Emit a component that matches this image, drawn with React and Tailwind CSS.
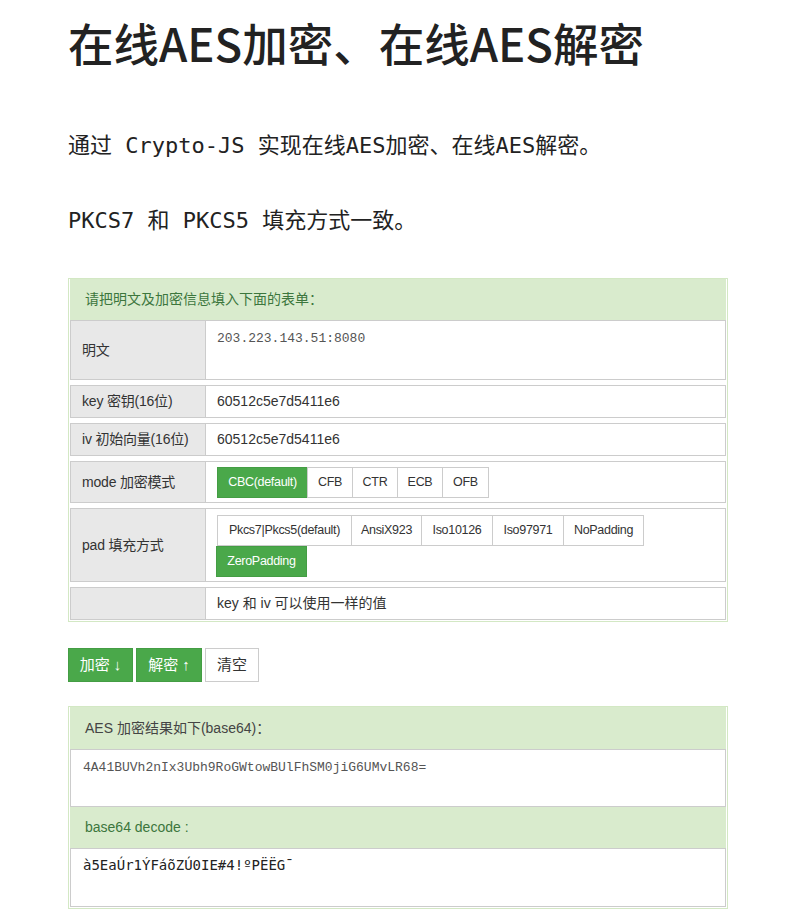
import React from 'react'

const sans = { fontFamily: '"Liberation Sans", "Noto Sans CJK SC", sans-serif' }

function Row({ label, className = '', children }) {
  return (
    <div className={`flex border border-[#cccccc] ${className}`}>
      <div className="w-[135px] shrink-0 bg-[#e8e8e8] border-r border-[#cccccc] flex items-center pl-[11px] text-[14px] text-[#333] tracking-[-0.2px]">
        {label}
      </div>
      <div className="flex-1 bg-white pl-[11px] pr-[12px]">{children}</div>
    </div>
  )
}

function Seg({ active, w, children }) {
  return (
    <div
      className={`h-[31px] -ml-px first:ml-0 flex items-center justify-center text-[12.5px] tracking-[-0.3px] border ${w} ${
        active ? 'bg-[#4aa84a] border-[#449d44] text-white' : 'bg-white border-[#cccccc] text-[#333]'
      }`}
    >
      {children}
    </div>
  )
}

export default function App() {
  return (
    <div className="bg-white min-h-screen pl-[68px] pb-[10px]" style={sans}>
      <div className="w-[660px]">
        <h1
          className="pt-[17px] text-[45.5px] leading-[1.1] font-medium text-[#222]"
          style={{ fontFamily: '"Noto Sans CJK SC", sans-serif' }}
        >
          在线AES加密、在线AES解密
        </h1>

        <div
          className="text-[22px] leading-[30px] text-[#222]"
          style={{ fontFamily: '"DejaVu Sans Mono", "Noto Sans CJK SC", monospace' }}
        >
          <p className="mt-[64px]">通过 Crypto-JS 实现在线AES加密、在线AES解密。</p>
          <p className="mt-[45px]">PKCS7 和 PKCS5 填充方式一致。</p>
        </div>

        {/* form panel */}
        <div className="mt-[42px] border border-[#d3e8c4] px-px pb-px">
          <div className="h-[41px] bg-[#d9ebcd] flex items-center pl-[15px] text-[14px] text-[#3c763d]">
            请把明文及加密信息填入下面的表单：
          </div>
          <div className="flex flex-col gap-[5px]">
            <Row label="明文" className="h-[60px]">
              <div
                className="pt-[8px] text-[13px] text-[#555]"
                style={{ fontFamily: '"Liberation Mono", monospace' }}
              >
                203.223.143.51:8080
              </div>
            </Row>
            <Row label="key 密钥(16位)" className="h-[33px]">
              <div className="h-full flex items-center text-[14px] text-[#333]">60512c5e7d5411e6</div>
            </Row>
            <Row label="iv 初始向量(16位)" className="h-[33px]">
              <div className="h-full flex items-center text-[14px] text-[#333]">60512c5e7d5411e6</div>
            </Row>
            <Row label="mode 加密模式" className="h-[42px]">
              <div className="h-full flex items-center">
                <Seg active w="w-[91px]">CBC(default)</Seg>
                <Seg w="w-[46px]">CFB</Seg>
                <Seg w="w-[46px]">CTR</Seg>
                <Seg w="w-[46px]">ECB</Seg>
                <Seg w="w-[47px]">OFB</Seg>
              </div>
            </Row>
            <Row label="pad 填充方式" className="h-[74px]">
              <div className="pt-[6px] flex flex-wrap w-[440px]">
                <Seg w="w-[135px]">Pkcs7|Pkcs5(default)</Seg>
                <Seg w="w-[71px]">AnsiX923</Seg>
                <Seg w="w-[72px]">Iso10126</Seg>
                <Seg w="w-[72px]">Iso97971</Seg>
                <Seg w="w-[81px]">NoPadding</Seg>
                <div className="h-[31px] w-[91px] -ml-px flex items-center justify-center text-[12.5px] tracking-[-0.3px] bg-[#4aa84a] border border-[#449d44] text-white">
                  ZeroPadding
                </div>
              </div>
            </Row>
            <Row label="" className="h-[33px]">
              <div className="h-full flex items-center text-[14px] text-[#333]">key 和 iv 可以使用一样的值</div>
            </Row>
          </div>
        </div>

        {/* actions */}
        <div className="mt-[26px] flex gap-[3px] text-[15px]">
          <button className="h-[34px] w-[65px] bg-[#4aa84a] border border-[#449d44] text-white">加密 ↓</button>
          <button className="h-[34px] w-[66px] bg-[#4aa84a] border border-[#449d44] text-white">解密 ↑</button>
          <button className="h-[34px] w-[54px] bg-white border border-[#cccccc] text-[#333]">清空</button>
        </div>

        {/* result panel */}
        <div className="mt-[24px] border border-[#d3e8c4] px-px pb-px">
          <div className="h-[42px] bg-[#d9ebcd] flex items-center pl-[15px] text-[14px] text-[#444]">
            AES 加密结果如下(base64)：
          </div>
          <div
            className="h-[58px] bg-white border border-[#cccccc] pl-[12px] pt-[8px] text-[13px] text-[#555]"
            style={{ fontFamily: '"Liberation Mono", monospace' }}
          >
            4A41BUVh2nIx3Ubh9RoGWtowBUlFhSM0jiG6UMvLR68=
          </div>
          <div className="h-[41px] bg-[#d9ebcd] flex items-center pl-[15px] text-[14px] text-[#3c763d]">
            base64 decode :
          </div>
          <div
            className="h-[59px] bg-white border border-[#cccccc] pl-[12px] pt-[6px] text-[14px] text-[#222]"
            style={{ fontFamily: '"DejaVu Sans Mono", monospace' }}
          >
            à5EaÚr1ÝFáõZÚ0IE#4!ºPËËG¯
          </div>
        </div>
      </div>
    </div>
  )
}
